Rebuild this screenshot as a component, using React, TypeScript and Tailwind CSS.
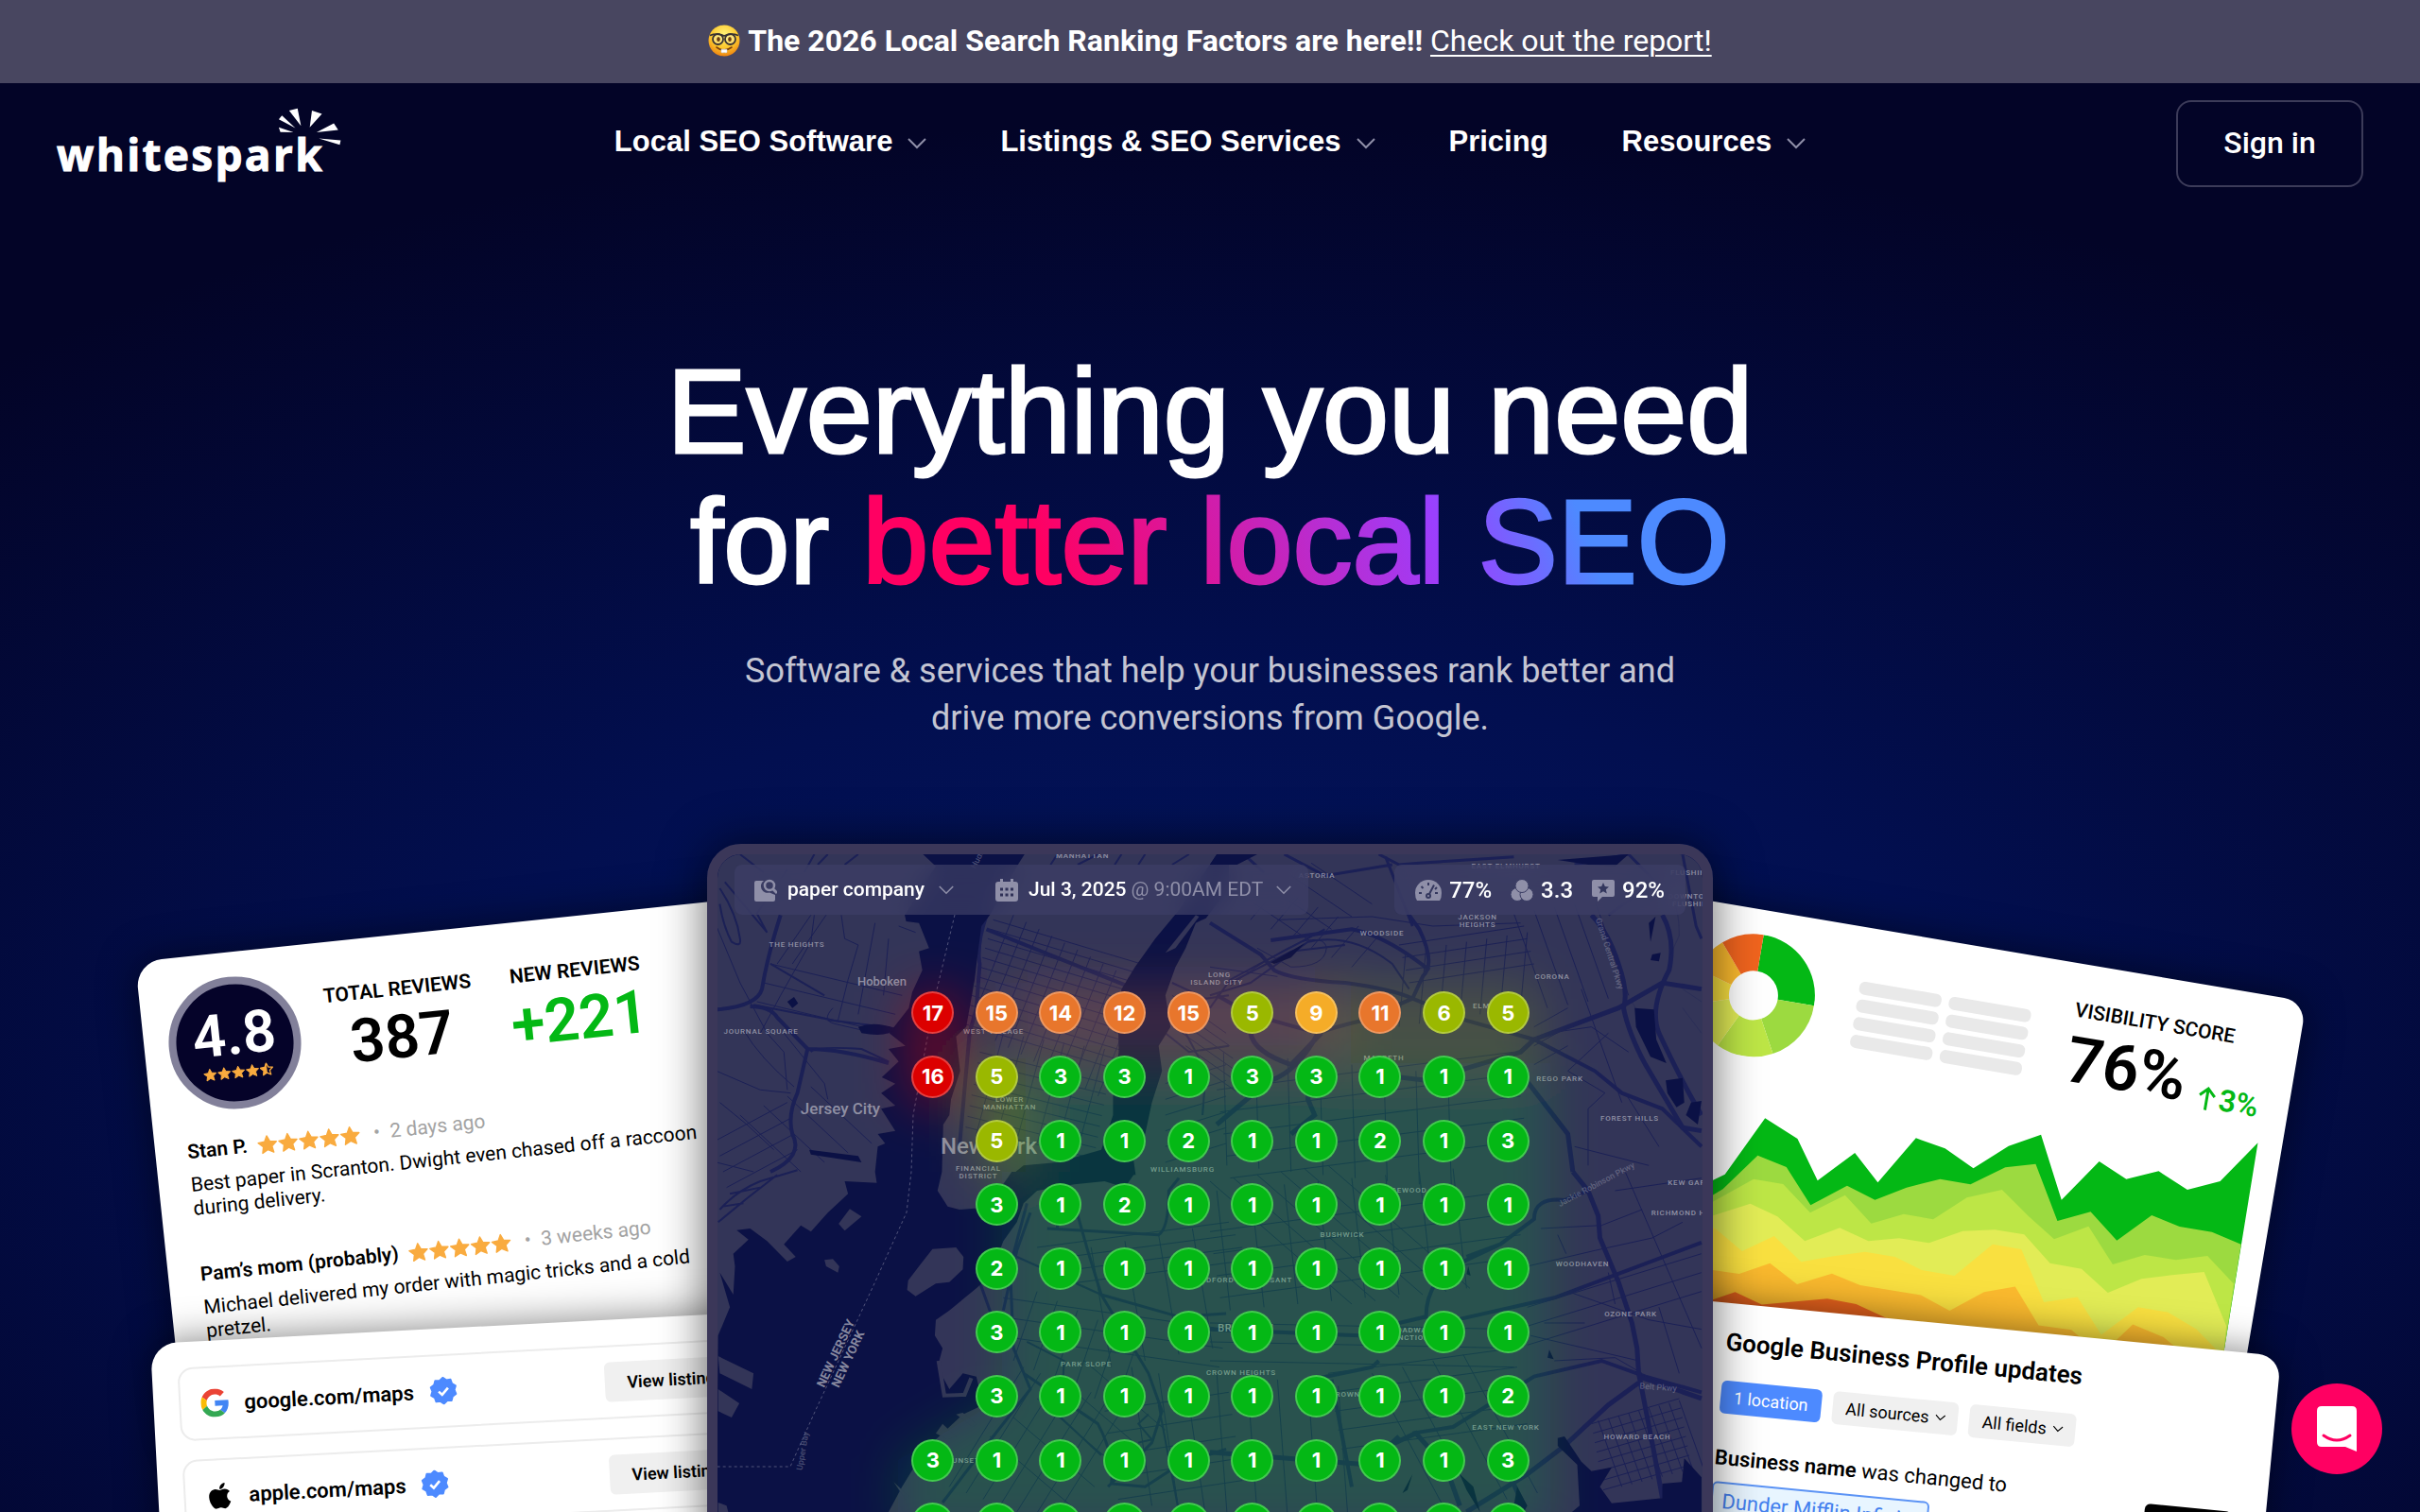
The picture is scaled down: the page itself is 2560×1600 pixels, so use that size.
import type { ReactNode } from 'react'
import clsx from 'clsx'

const ranks: (number | null)[][] = [
  [17, 15, 14, 12, 15, 5, 9, 11, 6, 5],
  [16, 5, 3, 3, 1, 3, 3, 1, 1, 1],
  [null, 5, 1, 1, 2, 1, 1, 2, 1, 3],
  [null, 3, 1, 2, 1, 1, 1, 1, 1, 1],
  [null, 2, 1, 1, 1, 1, 1, 1, 1, 1],
  [null, 3, 1, 1, 1, 1, 1, 1, 1, 1],
  [null, 3, 1, 1, 1, 1, 1, 1, 1, 2],
  [3, 1, 1, 1, 1, 1, 1, 1, 1, 3],
  [3, 1, 1, 1, 1, 1, 1, 1, 1, 1],
]

function rankColor(rank: number) {
  if (rank >= 16) return 'bg-[#dc0000]'
  if (rank >= 11) return 'bg-[#e8762c]'
  if (rank >= 8) return 'bg-[#f5ac28]'
  if (rank >= 5) return 'bg-[#9ab800]'
  return 'bg-[#04b815]'
}

// text, centre x, baseline y
const districts: [string, number, number][] = [
  ['MANHATTAN', 1145, 908],
  ['THE HEIGHTS', 843, 1002],
  ['JOURNAL SQUARE', 805, 1094],
  ['WEST VILLAGE', 1051, 1094],
  ['LOWER', 1068, 1166],
  ['MANHATTAN', 1068, 1174],
  ['FINANCIAL', 1035, 1239],
  ['DISTRICT', 1035, 1247],
  ['WILLIAMSBURG', 1251, 1240],
  ['LONG', 1290, 1034],
  ['ISLAND CITY', 1287, 1042],
  ['ASTORIA', 1393, 929],
  ['EAST ELMHURST', 1593, 919],
  ['WOODSIDE', 1462, 990],
  ['JACKSON', 1563, 973],
  ['HEIGHTS', 1563, 981],
  ['CORONA', 1642, 1036],
  ['ELMHURST', 1582, 1067],
  ['MASPETH', 1464, 1122],
  ['REGO PARK', 1650, 1144],
  ['FOREST HILLS', 1724, 1186],
  ['FLUSHING', 1789, 926],
  ['DOWNTOWN', 1791, 951],
  ['FLUSHING', 1791, 959],
  ['KEW GARDENS', 1796, 1254],
  ['RICHMOND HILL', 1782, 1286],
  ['RIDGEWOOD', 1483, 1262],
  ['BUSHWICK', 1420, 1309],
  ['BEDFORD-STUYVESANT', 1316, 1357],
  ['WOODHAVEN', 1674, 1340],
  ['OZONE PARK', 1725, 1393],
  ['BROADWAY', 1490, 1410],
  ['JUNCTION', 1490, 1418],
  ['PARK SLOPE', 1149, 1446],
  ['CROWN HEIGHTS', 1313, 1455],
  ['BROWNSVILLE', 1438, 1478],
  ['EAST NEW YORK', 1593, 1513],
  ['HOWARD BEACH', 1732, 1523],
  ['SUNSET PARK', 1032, 1548],
]

// n parallel segments, each shifted by (dx, dy)
function hatch(x1: number, y1: number, x2: number, y2: number, dx: number, dy: number, n: number) {
  return Array.from({ length: n }, (_, i) => `M${x1 + dx * i} ${y1 + dy * i}L${x2 + dx * i} ${y2 + dy * i}`).join('')
}

function Street({ d, w = 1 }: { d: string; w?: number }) {
  return <path d={d} strokeWidth={w} vectorEffect="non-scaling-stroke" />
}

function CityMap() {
  return (
    <svg
      className="absolute inset-0 size-full"
      viewBox="0 0 1042 760"
      preserveAspectRatio="xMinYMin slice"
      aria-hidden="true"
    >
      <defs>
        <filter id="soft" x="-50%" y="-50%" width="200%" height="200%">
          <feGaussianBlur stdDeviation="26" />
        </filter>
      </defs>
      <rect width="1042" height="760" fill="#333558" />
      <g transform="translate(-759 -904)">
        <g transform="translate(740 880) scale(.3571 .3333)" fill="none" stroke="#1b2056">
          {/* Jersey side */}
          <Street d={hatch(330, 265, 230, 420, 45, 0, 2) + hatch(210, 420, 600, 520, -20, 60, 3)} />
          <Street d={hatch(120, 900, 300, 1080, 70, -30, 4) + hatch(50, 980, 260, 860, 10, 50, 4)} />
          <Street d="M340 265L330 350L240 520L180 640M420 265L430 340L470 360L440 470L410 600M520 290L470 580M560 340L545 520M590 300L640 320M380 600L560 620M395 560Q360 600 400 610L520 640" />
          <Street d="M50 300L120 480L200 640L250 700L260 820M130 630Q180 720 280 810M250 640L370 800L380 850M50 760L180 820L270 830M60 860L140 930L220 1010M50 1050L160 1080" />
          <Street d="M60 180Q110 260 120 340Q125 370 95 350Q70 300 60 230M75 160L200 320L170 260L260 120M310 130L340 72M350 105L380 72M430 105L470 72M190 130L120 72" w={2} />
          <Street d="M240 265Q200 400 185 500Q170 555 50 565M150 555Q210 555 230 590L320 690Q420 690 560 735M320 690L290 830Q260 900 275 960Q310 1030 210 1080" w={4} />
          <Street d="M330 700Q340 680 480 690L560 730M160 550L400 600L580 625M210 420L370 520" w={2} />
          <Street d="M60 1200Q110 1140 180 1110L290 1075M55 1240L140 1165L230 1090M70 1190L130 1180M90 1150L180 1130" w={2} />
          {/* Manhattan */}
          <Street d={hatch(930, 265, 800, 620, 38, 22, 11)} />
          <Street d={hatch(870, 280, 1340, 430, -8, 30, 12)} />
          <Street d={hatch(830, 700, 1210, 800, -6, 34, 8) + hatch(900, 640, 820, 960, 60, 10, 6)} />
          <Street d="M850 265Q820 360 830 420L820 560L800 640L790 760L770 1000M1330 420L1250 520L1235 640M850 310L1290 500L1240 620" w={4} />
          <Street d="M1120 105L1180 72M1230 105L1250 72M1300 105L1320 72M1400 105L1450 72M1040 105L1060 72" w={2} />
          {/* Queens and north Brooklyn */}
          <Street d={hatch(1400, 520, 1560, 640, 10, 40, 6) + hatch(1380, 800, 1560, 740, 0, 50, 6)} />
          <Street d="M1490 540L1440 640L1500 760L1490 900M1400 480L1500 530L1568 520M1380 640L1450 700L1568 680" w={2} />
        </g>
        <g transform="translate(1280 880) scale(.3571 .3333)" fill="none" stroke="#1b2056">
          <Street d={hatch(200, 180, 120, 280, 60, 30, 6) + hatch(300, 100, 480, 230, -60, 40, 4)} />
          <Street d={hatch(560, 360, 930, 300, 10, 40, 4) + hatch(580, 380, 560, 620, 60, -10, 7)} />
          <Street d={hatch(40, 700, 50, 1060, 95, 10, 8) + hatch(20, 820, 900, 700, 10, 70, 5)} />
          <Street d={hatch(960, 620, 1060, 560, 0, 60, 3) + hatch(900, 260, 1000, 560, 60, -10, 5)} />
          <Street d="M0 430L200 460M200 280L480 270L660 300L920 290M140 370L240 430Q340 430 345 370Q340 330 270 350Q180 390 60 490M1100 500L1220 860M1180 640L1060 760L1170 830L1120 880L1120 1060M1000 640L1130 620L1240 700M1230 830L1330 1000M1080 1000L1300 1060" />
          <Street d="M0 520L120 480L290 350Q420 320 540 420L590 500M0 560L60 470L340 310M60 480L240 380L400 360" w={2} />
          <Street d="M0 290Q90 350 150 390L190 440Q240 470 400 480Q540 500 600 530L630 460Q670 420 620 310L590 265M180 345L420 310Q520 330 650 440M600 530L760 600L960 660L1140 760L1220 830L1340 880L1456 1000M320 640Q370 620 450 600L600 530M20 520L120 580L320 640" w={4} />
          <Street d="M960 660L1210 560L1340 480L1456 500M960 660L920 700L640 790L480 770M1130 265Q1180 320 1210 420Q1240 510 1225 560Q1240 640 1290 740L1400 940L1456 950M1340 265Q1380 340 1360 440Q1300 560 1330 640Q1400 800 1456 900M930 780L1060 960L1075 1080M120 640Q130 700 240 740L330 640M320 640Q260 760 180 790M20 930L120 840M300 740L290 850L310 900L240 960" w={5} />
          <Street d="M100 72L160 130M220 72L340 140L540 105M500 72L560 105L620 100L760 90L900 80M520 80L600 300M1080 105L1240 72L1320 160L1180 265M1400 72L1440 300L1456 340" w={3} />
          <path d="M1200 200L1330 190Q1390 190 1390 330L1360 400M1250 540L1290 620M1400 500L1456 540M1400 560L1456 640" />
        </g>
        <g transform="translate(740 1240) scale(.3571 .3333)" fill="none" stroke="#1b2056">
          <Street d={hatch(900, 400, 1560, 500, -10, 60, 3) + hatch(1000, 380, 930, 600, 60, 30, 6)} />
          <Street d={hatch(960, 620, 740, 1000, 50, 20, 7) + hatch(1160, 240, 1220, 620, 100, -20, 4)} />
          <Street d={hatch(1000, 240, 1568, 160, 20, 40, 4) + hatch(860, 840, 1100, 1060, 70, -60, 5)} />
          <Street d={hatch(1280, 620, 1340, 1060, 80, 20, 3) + hatch(1200, 760, 1568, 700, 10, 70, 5)} />
          <Street d="M1030 180L1360 200Q1390 180 1390 60L1420 20M1060 180L1060 60M980 130L940 250L900 440M970 100L920 300L930 560L980 690L870 840L720 1050M830 350L900 560M1100 60L1150 250L1190 390L1420 460L1560 450M1190 390L1330 640L1370 760L1340 860L1210 1000M960 640L1180 800Q1230 900 1220 990L1320 1000L1420 930L1560 880" w={3} />
          <Street d="M940 270L1190 390M970 540L1080 600L1070 780L1190 900M1360 740L1420 1080M1300 860L1340 850L1300 800L1330 770" w={2} />
        </g>
        <g transform="translate(1280 1240) scale(.3571 .3333)" fill="none" stroke="#1b2056">
          <Street d={hatch(20, 60, 60, 440, 100, -10, 8) + hatch(0, 190, 900, 60, 10, 70, 4)} />
          <Street d={hatch(0, 480, 900, 500, 0, 60, 3) + hatch(350, 640, 900, 560, 10, 60, 5)} />
          <Street d={hatch(20, 640, 50, 1080, 90, 10, 5) + hatch(480, 640, 700, 1080, 90, -20, 4)} />
          <Street d={hatch(0, 30, 420, 420, 70, -10, 6) + hatch(940, 430, 1456, 260, 0, 60, 3)} />
          <Street d="M980 180L1160 170L1280 120M940 300L1140 250L1310 210L1400 160M1060 380L1300 470L1456 500M1330 430L1390 640M1180 320L1200 420M1030 200L1055 260M1200 60L1456 20M1020 600L1200 590L1280 640M950 520L1270 600M990 480L1110 480M1230 0L1456 560" />
          <Street d={hatch(1130, 800, 1390, 720, 5, 30, 8) + hatch(1150, 790, 1220, 1000, 30, -8, 9)} />
          <Street d="M730 470L1020 400L1456 225M760 270L860 230L960 150Q960 80 1050 90L1120 60M300 660L480 620L500 600M360 660L420 1000M560 480L640 460Q640 400 670 350L740 290L860 230M0 500L440 520M600 830L720 810L960 650L1160 600L1290 650L1456 700" w={4} />
          <Street d="M1075 0L1120 60L1150 140L1155 210L1210 350L1250 480L1265 560L1270 640L1310 860L1340 1035M1270 670L1180 740L1050 870L940 960L760 1080M1270 650L1456 720M530 870L610 830L700 940L740 1060M560 840L470 930L0 890M890 970L930 1060" w={5} />
        </g>

        {/* rivers and the bay */}
        <g fill="#0b1145">
          <g transform="translate(740 880) scale(.3571 .3333)">
            <path d="M650 60L970 60L940 110L860 265L835 300L825 380L815 470L800 560L790 620L760 650L772 760L745 850L740 900L722 930L718 1080L520 1080L528 1000L550 990L528 960L580 950L538 880L580 870L538 830L580 800L540 780L590 730L560 690L610 680L562 640L620 560L630 510L660 440L650 380L680 370L650 290L612 285L608 265L700 110Z" />
            <path d="M1540 60L1568 60L1568 180L1500 275L1470 290L1440 370L1410 430L1380 520L1395 620L1360 680L1370 760L1340 860L1320 960L1280 1000L1292 1090L925 1090L960 1060L1060 1050L1190 1010L1225 900L1225 800L1242 700L1240 600L1250 500L1290 430L1350 340L1420 250Z" />
            <path d="M260 540L280 525L292 545L275 560ZM470 620Q520 600 580 625Q560 655 480 640ZM325 1010L470 1030L480 1050L330 1025Z" />
            <path d="M1380 385L1470 265L1480 270L1410 370Z" fill="#333558" />
          </g>
          <g transform="translate(1280 880) scale(.3571 .3333)">
            <path d="M20 72L140 72L80 105L0 105ZM1030 90L1240 72L1200 110L1120 105ZM180 415L280 355L240 400L190 420Z" />
            <path d="M1258 560L1315 565L1322 660L1352 735L1305 715L1262 620ZM1350 790L1400 782L1405 860L1382 875L1355 830ZM1425 860L1456 855L1445 930L1410 900ZM1300 290L1320 270L1305 350ZM1310 390L1335 385L1330 412L1305 408Z" />
          </g>
          <g transform="translate(740 1240) scale(.3571 .3333)">
            <path d="M520 0L525 35L430 30L440 70L380 130L330 190L300 170L250 230L285 270L260 285L200 220L150 180L110 185L145 215L100 260L105 300L100 390L60 320L90 430L55 520L50 1120L540 1120L600 1000L640 930L700 850L780 770L840 740L820 650L780 640L740 690L705 620L720 560L697 520L700 470L740 440L820 370L860 330L900 220L940 160L960 100L1000 60L1110 40L1200 30L1260 50L1292 0L925 0L880 70L830 115L770 120L735 110L705 60L718 0Z" />
          </g>
          <g transform="translate(1280 1240) scale(.3571 .3333)">
            <path d="M1030 845L1050 840L1100 920L1130 950L1190 938L1155 1000L1190 1052L1340 1036L1340 990L1398 985L1405 910L1456 970L1456 1100L1050 1100L1095 1060L1088 930L1030 870ZM570 1020L600 960L585 1010ZM740 960L780 1000L800 1080L760 1010ZM910 1000L940 1060L930 1080L900 1060ZM1000 590L1005 565L1018 595ZM760 325L765 300L772 330Z" />
          </g>
        </g>
        <g transform="translate(740 1240) scale(.3571 .3333)" fill="#333558">
          <path d="M690 245L760 240L782 270L780 310L740 350L700 355L640 395L615 375L618 345L650 300ZM370 280L395 277L414 300L410 320L375 300ZM445 118L480 142L430 187L412 165ZM55 585L160 640L155 690L60 640ZM55 690L118 735L95 780L55 760ZM55 1050L80 1060L85 1080L55 1080ZM575 985L620 1030L610 1040ZM700 830L720 800L760 840L735 850ZM760 770L780 765L820 800L810 810Z" />
          <path d="M708 600L725 710L785 708L805 655" fill="none" stroke="#333558" strokeWidth="12" />
        </g>
        <g fill="none" stroke="#8a8ba6" strokeOpacity=".55" strokeDasharray="3 3">
          <path d="M1010 968L988 1060L966 1180L964 1240L959 1283L926 1356L862 1494L836 1552H759" />
        </g>

        <g fill="#a9a9b8" fillOpacity=".8" textAnchor="middle" className="font-[Roboto,sans-serif] font-medium">
          {districts.map(([text, x, y]) => (
            <text key={text + x + y} x={x} y={y} fontSize="8" className="tracking-widest">
              {text}
            </text>
          ))}
          <text x="933" y="1043" fontSize="13">Hoboken</text>
          <text x="889" y="1179" fontSize="17">Jersey City</text>
          <text x="1046" y="1221" fontSize="24">New York</text>
          <text x="1318" y="1409" fontSize="11" className="tracking-wider">BROOKLYN</text>
          <text fontSize="13" className="font-bold" transform="translate(888 1434) rotate(-65)">NEW JERSEY</text>
          <text fontSize="13" className="font-bold" transform="translate(901 1440) rotate(-65)">NEW YORK</text>
          <g fillOpacity=".4" fontSize="9">
            <text transform="translate(852 1536) rotate(-80)">Upper Bay</text>
            <text transform="translate(1039 906) rotate(-62)">Hudson</text>
            <text transform="translate(1700 1010) rotate(72)">Grand Central Pkwy</text>
            <text transform="translate(1690 1256) rotate(-28)">Jackie Robinson Pkwy</text>
            <text transform="translate(1754 1471) rotate(4)">Belt Pkwy</text>
          </g>
        </g>

        {/* rank heat */}
        <g filter="url(#soft)">
          <path d="M1060 1125H1640V1620H950V1545L1060 1480Z" fill="#0fc828" fillOpacity=".2" />
          <rect x="1070" y="1040" width="350" height="75" fill="#e8762c" fillOpacity=".22" />
          <rect x="1400" y="1040" width="230" height="90" fill="#9ab800" fillOpacity=".2" />
          <rect x="1035" y="1130" width="50" height="110" fill="#9ab800" fillOpacity=".3" />
          <rect x="960" y="1050" width="60" height="120" fill="#dc0000" fillOpacity=".4" />
        </g>
      </g>
    </svg>
  )
}

function Chevron({ className }: { className?: string }) {
  return (
    <svg viewBox="0 0 20 12" fill="none" stroke="currentColor" className={clsx('shrink-0', className)} aria-hidden="true">
      <path d="M1 1L10 10L19 1" strokeWidth="2" />
    </svg>
  )
}

const STAR = 'M12 1.5l3.1 6.7 7.4.8-5.5 5 1.5 7.2L12 17.600l-6.500 3.600 1.500-7.200-5.500-5 7.400-.8z'

function Stars({ half, className }: { half?: boolean; className: string }) {
  return (
    <span className="flex" role="img" aria-label={half ? '4.5 stars' : '5 stars'}>
      {[0, 1, 2, 3, 4].map((i) => (
        <svg key={i} viewBox="0 0 24 24" className={className} fill="#f9ab3f" stroke="#f9ab3f" strokeLinejoin="round">
          {half && i === 4 ? (
            <>
              <path d={STAR} fill="none" strokeWidth="2" />
              <path d="M12 1.500V17.600l-6.500 3.600 1.500-7.200-5.500-5 7.400-.8z" />
            </>
          ) : (
            <path d={STAR} strokeWidth="1.500" />
          )}
        </svg>
      ))}
    </span>
  )
}

function Nerd() {
  return (
    <svg viewBox="0 0 34 34" className="size-[34px]" role="img" aria-label="Nerd face">
      <defs>
        <radialGradient id="face" cx=".5" cy=".3" r=".7">
          <stop offset="0" stopColor="#fff27a" />
          <stop offset=".6" stopColor="#fdc92d" />
          <stop offset="1" stopColor="#ee8410" />
        </radialGradient>
      </defs>
      <circle cx="17" cy="17" r="16.500" fill="url(#face)" />
      <g fill="#fff3b0" fillOpacity=".45" stroke="#3a3433" strokeWidth="1.800">
        <circle cx="10.500" cy="15.500" r="5.500" />
        <circle cx="23.500" cy="15.500" r="5.500" />
      </g>
      <path d="M2 11.500Q10 8.500 17 12Q24 8.500 32 11.500" fill="none" stroke="#3a3433" strokeWidth="1.800" />
      <ellipse cx="11" cy="15.500" rx="1.800" ry="2.600" fill="#6b3c10" />
      <ellipse cx="23" cy="15.500" rx="1.800" ry="2.600" fill="#6b3c10" />
      <path d="M9 24Q17 30 25 24" fill="none" stroke="#7a3f0c" strokeWidth="1.600" strokeLinecap="round" />
      <path d="M14 26.200H20V29.500Q18.500 30.200 17 29.500Q15.500 30.200 14 29.500Z" fill="#fff" stroke="#cdd3dc" strokeWidth=".5" />
    </svg>
  )
}

function Logo() {
  return (
    <a href="#home" className="relative block w-[303px] justify-self-start" aria-label="Whitespark home">
      <span className="block pt-[22px] font-['Open_Sans',sans-serif] text-[46px] leading-[60px] font-bold tracking-wider text-white [-webkit-text-stroke:1px_currentColor]">
        whitespark
      </span>
      <svg viewBox="760 40 210 130" className="absolute top-[2px] right-0 h-[43px] w-[70px]" fill="#fff" aria-hidden="true">
        <path d="M775 68L765 80L818 108ZM798 52L825 45L836 101ZM871 52L903 63L864 106ZM941 93L955 114L886 122ZM893 141L963 147L960 162ZM765 106L770 121L812 122Z" />
      </svg>
    </a>
  )
}

function NavItem({ children }: { children: ReactNode }) {
  return (
    <button type="button" className="flex items-center gap-4">
      {children}
      <Chevron className="mt-1 h-3 w-5 text-[#8f8fa8]" />
    </button>
  )
}

function Review({ name, when, children }: { name: string; when: string; children: ReactNode }) {
  return (
    <article className="text-[21px] leading-[25px]">
      <div className="flex items-center gap-[10px]">
        <h3 className="font-semibold">{name}</h3>
        <Stars className="size-[22px]" />
        <span className="pl-1 text-[#a3a3a3]">•&nbsp; {when}</span>
      </div>
      <p className="mt-[10px]">{children}</p>
    </article>
  )
}

function Verified() {
  return (
    <svg viewBox="0 0 30 30" className="size-[30px]" role="img" aria-label="Verified">
      <path
        d="M15 1l3.600 2.700 4.500-.3 1.300 4.300 3.700 2.500-1.500 4.300 1.500 4.300-3.700 2.500-1.300 4.300-4.500-.3L15 28.500l-3.600-2.700-4.500.3-1.300-4.300-3.700-2.500 1.500-4.300-1.500-4.300 3.700-2.500 1.300-4.300 4.500.3z"
        fill="#4d8aff"
        stroke="#4d8aff"
        strokeWidth="2"
        strokeLinejoin="round"
      />
      <path d="M10 15.500l3.500 3.500 6.500-7" fill="none" stroke="#fff" strokeWidth="2.600" />
    </svg>
  )
}

function GoogleMark() {
  return (
    <svg viewBox="0 0 48 48" className="size-[30px]" aria-hidden="true">
      <path fill="#EA4335" d="M24 9.500c3.540 0 6.710 1.220 9.210 3.600l6.850-6.850C35.900 2.380 30.470 0 24 0 14.620 0 6.510 5.380 2.560 13.220l7.980 6.190C12.430 13.720 17.740 9.500 24 9.500z" />
      <path fill="#4285F4" d="M46.980 24.550c0-1.570-.15-3.090-.38-4.550H24v9.020h12.940c-.58 2.960-2.260 5.480-4.780 7.180l7.730 6c4.510-4.180 7.090-10.360 7.090-17.650z" />
      <path fill="#FBBC05" d="M10.530 28.590c-.48-1.450-.76-2.990-.76-4.590s.27-3.140.76-4.590l-7.980-6.190C.92 16.460 0 20.120 0 24c0 3.880.92 7.540 2.560 10.780l7.970-6.190z" />
      <path fill="#34A853" d="M24 48c6.480 0 11.930-2.130 15.890-5.810l-7.730-6c-2.150 1.450-4.920 2.300-8.160 2.300-6.260 0-11.570-4.220-13.470-9.910l-7.980 6.190C6.510 42.620 14.620 48 24 48z" />
    </svg>
  )
}

function AppleMark() {
  return (
    <svg viewBox="0 0 384 512" className="h-[31px] w-[30px]" aria-hidden="true">
      <path d="M318.700 268.700c-.2-36.700 16.400-64.400 50-84.800-18.800-26.900-47.200-41.700-84.700-44.600-35.500-2.800-74.300 20.700-88.500 20.700-15 0-49.400-19.700-76.400-19.700C63.300 141.200 4 184.800 4 273.500q0 39.300 14.400 81.200c12.800 36.700 59 126.700 107.200 125.200 25.200-.6 43-17.900 75.800-17.900 31.800 0 48.300 17.900 76.400 17.900 48.600-.7 90.400-82.500 102.600-119.300-65.200-30.700-61.700-90-61.700-91.900zm-56.600-164.200c27.300-32.400 24.800-61.900 24-72.500-24.100 1.400-52 16.400-67.900 34.900-17.500 19.800-27.800 44.300-25.600 71.900 26.100 2 49.900-11.400 69.500-34.300z" />
    </svg>
  )
}

function Listing({ icon, site }: { icon: ReactNode; site: string }) {
  return (
    <li className="flex h-[78px] items-center rounded-2xl border-2 border-[#ececec] pr-6 pl-[21px]">
      {icon}
      <span className="ml-4 text-[22px] font-semibold">{site}</span>
      <span className="ml-4">
        <Verified />
      </span>
      <button type="button" className="ml-auto h-[42px] rounded-md bg-[#f0f0f0] px-6 text-[18px] font-semibold">
        View listing
      </button>
    </li>
  )
}

const donut = [
  { from: 0, to: 90, color: '#04b815' },
  { from: 90, to: 152, color: '#9cda40' },
  { from: 152, to: 206, color: '#bde646' },
  { from: 206, to: 252, color: '#e2ec56' },
  { from: 252, to: 286, color: '#f9e040' },
  { from: 286, to: 320, color: '#fbba2e' },
  { from: 320, to: 360, color: '#f0641e' },
]

function slice(from: number, to: number) {
  const at = (deg: number, r: number) => {
    const a = ((deg - 90) * Math.PI) / 180
    return `${65 + r * Math.cos(a)} ${65 + r * Math.sin(a)}`
  }
  return `M${at(from, 65)}A65 65 0 0 1 ${at(to, 65)}L${at(to, 26)}A26 26 0 0 0 ${at(from, 26)}Z`
}

const areas: [string, string][] = [
  ['#04b815', 'M-60 940L30 940L80 908L178 730L257 795L306 928L397 840L453 934L546 793L617 826L686 889L772 818L851 782L901 989L993 867L1059 923L1138 898L1208 957L1288 930L1380 808L1296 1480'],
  ['#9cda40', 'M-60 1000L30 990L75 955L160 848L230 885L289 1006L378 944L446 989L523 950L605 923L679 940L764 886L838 875L891 1056L972 1027L1036 1118L1121 1038L1189 1074L1268 1091L1339 1130L1296 1480'],
  ['#bde646', 'M-60 1020L30 1010L150 923L222 939L288 1030L373 974L437 1064L516 1034L588 1051L670 982L756 957L820 1040L883 1114L967 1073L1026 1194L1104 1164L1180 1180L1257 1167L1321 1256L1296 1480'],
  ['#e2ec56', 'M-60 1060L30 1048L142 1001L208 1042L275 1120L360 1078L430 1120L505 1111L578 1126L660 1088L738 1084L810 1099L873 1190L950 1208L1014 1284L1096 1240L1170 1228L1249 1218L1303 1390L1296 1480'],
  ['#f9e040', 'M-60 1060L30 1060L60 1084L122 1152L200 1104L266 1186L345 1168L422 1154L495 1170L560 1212L640 1230L733 1130L803 1146L858 1314L940 1298L998 1418L1088 1330L1160 1346L1230 1400L1290 1480'],
  ['#fbba2e', 'M-60 1208L30 1208L115 1224L190 1190L256 1257L341 1223L410 1260L558 1292L628 1341L712 1282L788 1265L845 1388L925 1402L960 1440L1030 1440L1075 1385L1150 1425L1200 1480'],
  ['#e9631d', 'M-60 1315L30 1315L105 1282L170 1322L330 1303L400 1320L500 1380L600 1480'],
]

function VisibilityCard() {
  return (
    <section className="absolute top-[167px] right-[calc(50%-1160px)] h-[520px] w-[700px] origin-top-right rotate-[9.6deg] rounded-3xl bg-white shadow-[0_0_40px_rgba(0,0,0,0.5)]">
      <svg viewBox="0 0 700 520" className="absolute inset-0 size-full" aria-hidden="true">
        <g transform="translate(700 0) rotate(-9.6) translate(-650 -120) scale(.4337 .3333)">
          {areas.map(([color, d]) => (
            <path key={color} d={`${d}L1260 1700L-60 1700Z`} fill={color} />
          ))}
        </g>
      </svg>
      <div className="relative flex pt-[26px] pl-[57px]">
        <svg viewBox="0 0 130 130" className="size-[130px]" aria-hidden="true">
          {donut.map((s) => (
            <path key={s.from} d={slice(s.from, s.to)} fill={s.color} />
          ))}
        </svg>
        <div className="mt-[31px] ml-11 grid grid-cols-2 gap-x-2 gap-y-[5px] self-start">
          {Array.from({ length: 8 }, (_, i) => (
            <span key={i} className="h-[14px] w-[88px] rounded-md bg-[#e9e9e9]" />
          ))}
        </div>
        <div className="ml-[45px] pt-[10px]">
          <h3 className="text-[21px] leading-[26px] font-medium">VISIBILITY SCORE</h3>
          <div className="flex items-end">
            <span className="text-[68px] leading-[80px] font-semibold">76%</span>
            <span className="ml-4 flex items-center pb-1 text-[32px] leading-[40px] font-semibold text-[#04b815]">
              <svg viewBox="0 0 18 26" className="mr-1 h-[26px] w-[18px]" fill="none" stroke="currentColor" strokeWidth="3" aria-hidden="true">
                <path d="M9 26V3M1 11L9 3L17 11" />
              </svg>
              3%
            </span>
          </div>
        </div>
      </div>
    </section>
  )
}

function FilterSelect({ label }: { label: string }) {
  return (
    <label className="relative flex h-[35px] items-center rounded-md bg-[#f0f0f0]">
      <select aria-label={label} className="h-full appearance-none pr-[30px] pl-[14px] text-[18px]">
        <option>{label}</option>
      </select>
      <Chevron className="pointer-events-none absolute right-[13px] h-[7px] w-[11px] [stroke-width:2px]" />
    </label>
  )
}

function UpdatesCard() {
  return (
    <section className="absolute top-[542px] right-[calc(50%-1133px)] h-[340px] w-[650px] origin-top-right rotate-[5.5deg] rounded-3xl bg-white pt-6 pr-9 pl-16 shadow-[0_0_40px_rgba(0,0,0,0.5)]">
      <h3 className="text-[26px] leading-[34px] font-semibold">Google Business Profile updates</h3>
      <div className="mt-6 flex gap-3">
        <button type="button" className="h-[35px] rounded-md bg-[#4d8aff] px-[14px] text-[18px] text-white">
          1 location
        </button>
        <FilterSelect label="All sources" />
        <FilterSelect label="All fields" />
      </div>
      <div className="mt-[34px] flex items-start justify-between text-[22px]">
        <div>
          <p className="leading-[26px]">
            <b className="font-semibold">Business name</b> was changed to
          </p>
          <p className="mt-3 w-fit rounded-md border-2 border-[#5b93f5] bg-[#e8f5ff] px-[10px] py-1 leading-[30px] text-[#4480ee]">
            Dunder Mifflin Infinity
          </p>
        </div>
        <div className="mt-[18px] h-[90px] w-[92px] rounded-md bg-black" />
      </div>
    </section>
  )
}

function GridPanel() {
  return (
    <section className="relative mx-auto h-[782px] w-[1064px] overflow-hidden rounded-[36px] border-[11px] border-[#3b3759]">
      <CityMap />
      <div className="relative flex justify-between px-[18px] pt-[11px] text-[21px] font-medium text-white">
        <div className="flex h-[53px] items-center rounded-lg bg-[#3d3f66]/70 pr-[18px] pl-[21px] backdrop-blur-md">
          <svg viewBox="0 0 24 24" className="size-6 text-[#8f8fa8]" aria-hidden="true">
            <path fill="currentColor" d="M2 2H10A7 7 0 0 0 16 14.500L22 17V22Q22 24 20 24H2Q0 24 0 22V4Q0 2 2 2Z" />
            <circle cx="16" cy="7" r="5" fill="none" stroke="currentColor" strokeWidth="2.500" />
            <path d="M19.500 10.500L24 15" stroke="currentColor" strokeWidth="3" />
          </svg>
          <label className="relative flex items-center">
            <select aria-label="Keyword" className="appearance-none pr-[30px] pl-[11px]">
              <option>paper company</option>
            </select>
            <Chevron className="pointer-events-none absolute right-0 h-[10px] w-4 text-[#8f8fa8]" />
          </label>
          <svg viewBox="0 0 24 24" className="ml-11 size-6 text-[#8f8fa8]" aria-hidden="true">
            <path fill="currentColor" d="M3 3H5V0H8V3H16V0H19V3H21Q24 3 24 6V21Q24 24 21 24H3Q0 24 0 21V6Q0 3 3 3Z" />
            <path d="M5 11H8M10.500 11H13.500M16 11H19M5 17H8M10.500 17H13.500M16 17H19" stroke="#2f3157" strokeWidth="3" />
          </svg>
          <button type="button" className="ml-[11px] flex items-center">
            Jul 3, 2025
            <span className="pl-[5px] font-normal text-[#8f8fa8]">@ 9:00AM EDT</span>
            <Chevron className="ml-[14px] h-[10px] w-4 text-[#8f8fa8]" />
          </button>
        </div>
        <div className="flex h-[53px] items-center gap-2 rounded-lg bg-[#3d3f66]/70 px-[22px] text-2xl backdrop-blur-md">
          <svg viewBox="0 0 28 22" className="h-[22px] w-7 text-[#8f8fa8]" aria-hidden="true">
            <path fill="currentColor" d="M14 0A14 14 0 0 1 28 14Q28 19 26 22H2Q0 19 0 14A14 14 0 0 1 14 0Z" />
            <g stroke="#34375e" strokeWidth="2" fill="none">
              <path d="M4 14H7M21 14H24M6.500 7L8.500 9M14 3V6M20 5.500L15 15M23 8L21 10" />
              <circle cx="14" cy="17" r="2" />
            </g>
          </svg>
          <span>77%</span>
          <svg viewBox="0 0 24 24" className="ml-3 size-6" fill="#8f8fa8" stroke="#3a3c63" aria-hidden="true">
            <circle cx="7" cy="16.500" r="7" />
            <circle cx="17" cy="16.500" r="7" />
            <circle cx="12" cy="7.500" r="7" />
          </svg>
          <span>3.3</span>
          <svg viewBox="0 0 24 24" className="ml-3 size-6" aria-hidden="true">
            <path fill="#8f8fa8" d="M2 1H22Q24 1 24 3V17Q24 19 22 19H11L6 24V19H2Q0 19 0 17V3Q0 1 2 1Z" />
            <path fill="#34375e" d="M12 4l1.800 4 4.200.4-3.200 2.800 1 4.200L12 13.200l-3.800 2.200 1-4.200L6 8.400l4.200-.4z" />
          </svg>
          <span>92%</span>
        </div>
      </div>
      <div className="relative mt-[70px] ml-[194px] grid w-[676px] grid-cols-10">
        {ranks.flat().map((rank, i) => (
          <div key={i} className="grid aspect-square place-items-center">
            {rank !== null && (
              <span
                className={clsx(
                  "grid size-[45px] place-items-center rounded-full border-2 border-white/25 font-[Inter,sans-serif] text-[22px] leading-none font-bold text-white",
                  rankColor(rank),
                )}
              >
                {rank}
              </span>
            )}
          </div>
        ))}
      </div>
    </section>
  )
}

export default function App() {
  return (
    <div className="relative flex h-screen flex-col overflow-hidden bg-[#030326] bg-[radial-gradient(ellipse_76%_64%_at_50%_72%,#03165f_0%,#020f50_42%,#030427_100%)] font-[Roboto,sans-serif] text-black">
      <aside className="flex h-[88px] shrink-0 items-center justify-center gap-2 bg-[#484660] pb-[2px] text-[32px] text-white">
        <Nerd />
        <p>
          <b className="font-bold">The 2026 Local Search Ranking Factors are here!!</b>{' '}
          <a href="#report" className="underline decoration-2 underline-offset-4">
            Check out the report!
          </a>
        </p>
      </aside>

      <header className="grid h-[128px] shrink-0 grid-cols-[1fr_auto_1fr] items-center px-[60px]">
        <Logo />
        <nav className="flex items-center gap-[78px] pb-1 font-['Liberation_Sans',Arial,sans-serif] text-[31px] leading-[40px] font-bold text-white">
          <NavItem>Local SEO Software</NavItem>
          <NavItem>Listings &amp; SEO Services</NavItem>
          <a href="#pricing">Pricing</a>
          <NavItem>Resources</NavItem>
        </nav>
        <a
          href="#signin"
          className="flex h-[92px] w-[198px] items-center justify-center justify-self-end rounded-2xl border-2 border-[#3c3b59] pb-[2px] text-[32px] font-medium text-white"
        >
          Sign in
        </a>
      </header>

      <main>
        <div className="pt-[151px] text-center">
          <h1 className="font-['Liberation_Sans',Arial,sans-serif] text-[126px] leading-[138px] text-white [-webkit-text-stroke:3px_currentColor]">
            Everything you need
            <br />
            for{' '}
            <span className="bg-[linear-gradient(70deg,#ff0062_22%,#9b3fff_66%,#4d8aff_82%)] bg-clip-text text-transparent">
              better local SEO
            </span>
          </h1>
          <p className="mx-auto mt-[42px] max-w-[1040px] text-[36px] leading-[50px] text-[#c4c5d2]">
            Software &amp; services that help your businesses rank better and drive more conversions from Google.
          </p>
        </div>

        <div className="relative mt-[108px]">
          <section className="absolute top-[125px] left-[calc(50%-1137px)] h-[520px] w-[720px] origin-top-left -rotate-6 rounded-[28px] bg-white p-[26px] shadow-[0_0_40px_rgba(0,0,0,0.5)]">
            <div className="flex">
              <div className="flex size-[140px] flex-col items-center justify-center rounded-full border-8 border-[#82809a] bg-[#050329] text-white">
                <span className="text-[62px] leading-[58px] font-semibold">4.8</span>
                <Stars half className="mt-1 size-[15px]" />
              </div>
              <div className="ml-7 pt-[18px] text-center">
                <h3 className="text-[21px] leading-[26px] font-semibold">TOTAL REVIEWS</h3>
                <p className="text-[64px] leading-[78px] font-semibold">387</p>
              </div>
              <div className="ml-[38px] pt-[18px] text-center">
                <h3 className="text-[21px] leading-[26px] font-semibold">NEW REVIEWS</h3>
                <p className="text-[64px] leading-[78px] font-semibold text-[#04b815]">+221</p>
              </div>
            </div>
            <div className="mt-[28px] ml-2 flex flex-col gap-[45px]">
              <Review name="Stan P." when="2 days ago">
                Best paper in Scranton. Dwight even chased off a raccoon
                <br />
                during delivery.
              </Review>
              <Review name="Pam’s mom (probably)" when="3 weeks ago">
                Michael delivered my order with magic tricks and a cold
                <br />
                pretzel.
              </Review>
            </div>
          </section>

          <section className="absolute top-[529px] left-[calc(50%-1121px)] h-[360px] w-[672px] origin-top-left -rotate-3 rounded-[28px] bg-white p-[27px] shadow-[0_0_40px_rgba(0,0,0,0.5)]">
            <ul className="flex flex-col gap-5">
              <Listing icon={<GoogleMark />} site="google.com/maps" />
              <Listing icon={<AppleMark />} site="apple.com/maps" />
            </ul>
          </section>

          <VisibilityCard />
          <UpdatesCard />

          <div className="relative mx-auto w-[1064px] rounded-[36px] shadow-[0_0_50px_rgba(0,0,0,0.6)]">
            <GridPanel />
          </div>
        </div>
      </main>

      <button
        type="button"
        aria-label="Open chat"
        className="fixed right-10 bottom-10 grid size-24 place-items-center rounded-full bg-[#ff0062]"
      >
        <svg viewBox="0 0 42 48" className="h-12 w-[42px]" aria-hidden="true">
          <path d="M5 0H37Q42 0 42 5V48L30 43H5Q0 43 0 38V5Q0 0 5 0Z" fill="#fff" />
          <path d="M7 31Q21 41 35 31" fill="none" stroke="#ff0062" strokeWidth="3" strokeLinecap="round" />
        </svg>
      </button>
    </div>
  )
}
